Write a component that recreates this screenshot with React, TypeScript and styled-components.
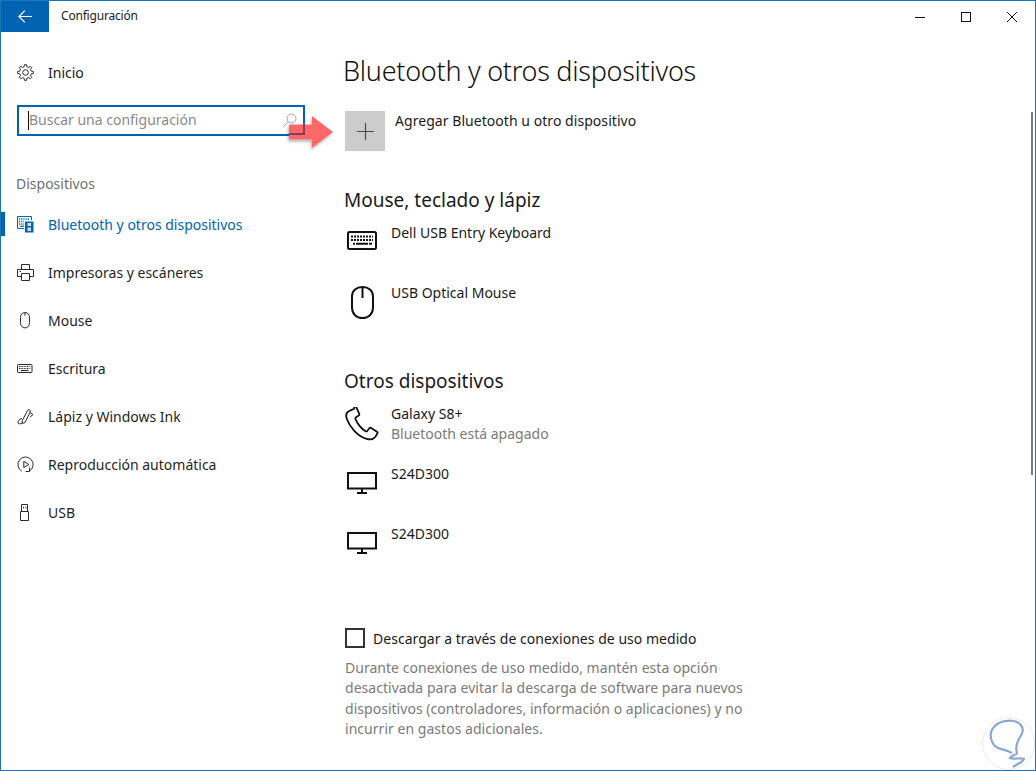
import React from "react";
import styled, { createGlobalStyle } from "styled-components";

const Global = createGlobalStyle`
  html, body { margin: 0; padding: 0; height: 100%; background: #fff; }
  #root { height: 100%; }
  * { box-sizing: border-box; }
`;

const FONT = `"Noto Sans", "Open Sans", sans-serif`;

const Frame = styled.div`
  position: relative;
  width: 1036px;
  height: 771px;
  overflow: hidden;
  background: #fff;
  border: 1px solid #1b74b8;
  font-family: ${FONT};
  color: #1a1a1a;
  display: flex;
  flex-direction: column;
`;

const TitleBar = styled.header`
  height: 31px;
  flex: none;
  display: flex;
  align-items: center;
`;

const BackButton = styled.div`
  width: 48px;
  height: 31px;
  background: #0063b1;
  display: flex;
  align-items: center;
  justify-content: center;
`;

const WindowTitle = styled.div`
  margin-left: 12px;
  padding-bottom: 2px;
  font-size: 12px;
  letter-spacing: -0.2px;
  flex: 1;
`;

const WindowControls = styled.div`
  display: flex;
  align-items: center;
  padding-right: 18px;
  gap: 36px;
`;

const ControlIcon = styled.svg`
  width: 10px;
  height: 10px;
  display: block;
`;

const Body = styled.div`
  flex: 1;
  display: flex;
  min-height: 0;
`;

const Sidebar = styled.nav`
  width: 342px;
  flex: none;
  padding-top: 16px;
`;

const HomeRow = styled.div`
  display: flex;
  align-items: center;
  height: 48px;
  padding-left: 16px;
  font-size: 14px;
`;

const NavIconSlot = styled.span`
  width: 31px;
  height: 20px;
  flex: none;
  display: flex;
  align-items: center;
  color: #2b2b2b;
`;

const SearchBox = styled.div`
  margin: 9px 0 0 16px;
  width: 288px;
  height: 31px;
  border: 2px solid #0063b1;
  display: flex;
  align-items: center;
  padding: 0 6px 0 9px;
  font-size: 14px;
  color: #8a8a8a;
`;

const Caret = styled.span`
  width: 1px;
  height: 19px;
  background: #111;
  flex: none;
`;

const SearchText = styled.span`
  flex: 1;
  padding-bottom: 2px;
`;

const GroupLabel = styled.div`
  margin: 36px 0 0 15px;
  height: 24px;
  line-height: 24px;
  font-size: 14px;
  color: #6f6f6f;
`;

const NavList = styled.div`
  margin-top: 4px;
`;

const NavItem = styled.div<{ $active?: boolean }>`
  position: relative;
  height: 48px;
  display: flex;
  align-items: center;
  padding-left: 16px;
  font-size: 14px;
  color: ${(p) => (p.$active ? "#0063b1" : "#1f1f1f")};
  ${NavIconSlot} { color: ${(p) => (p.$active ? "#0063b1" : "#2b2b2b")}; }
  &::before {
    content: "";
    display: ${(p) => (p.$active ? "block" : "none")};
    position: absolute;
    left: 0;
    top: 12px;
    width: 4px;
    height: 24px;
    background: #0063b1;
  }
`;

const Main = styled.main`
  flex: 1;
  min-width: 0;
`;

const PageTitle = styled.h1`
  margin: 17px 0 0 0;
  height: 44px;
  line-height: 44px;
  font-size: 27px;
  font-weight: 300;
  letter-spacing: -0.27px;
  color: #111;
`;

const AddRow = styled.div`
  display: flex;
  align-items: flex-start;
  margin: 18px 0 0 2px;
  gap: 10px;
`;

const AddTile = styled.div`
  width: 40px;
  height: 40px;
  background: #cccccc;
  display: flex;
  align-items: center;
  justify-content: center;
`;

const AddLabel = styled.div`
  font-size: 14px;
  letter-spacing: 0.05px;
  line-height: 20px;
`;

const SectionTitle = styled.h2<{ $top: number }>`
  margin: ${(p) => p.$top}px 0 0 1px;
  height: 26px;
  line-height: 26px;
  font-size: 19px;
  font-weight: 400;
  color: #1a1a1a;
`;

const DeviceList = styled.div`
  margin-top: 8px;
`;

const DeviceRow = styled.div`
  display: flex;
  align-items: flex-start;
  height: 60px;
  padding-left: 2px;
`;

const DeviceIconSlot = styled.div`
  width: 46px;
  height: 40px;
  flex: none;
  color: #111;
`;

const DeviceText = styled.div`
  font-size: 14px;
  line-height: 20px;
  padding-top: 2px;
`;

const DeviceSub = styled.div`
  color: #7a7a7a;
`;

const CheckRow = styled.div`
  display: flex;
  align-items: center;
  margin: 46px 0 0 2px;
  gap: 8px;
  font-size: 14px;
  letter-spacing: 0.03px;
`;

const CheckBox = styled.span`
  width: 20px;
  height: 20px;
  border: 2px solid #333;
  flex: none;
`;

const Description = styled.p`
  margin: 10px 0 0 2px;
  width: 404px;
  font-size: 14px;
  letter-spacing: 0.03px;
  line-height: 20.3px;
  color: #7a7a7a;
`;

const ScrollThumb = styled.div`
  position: absolute;
  right: 2px;
  top: 111px;
  width: 2px;
  height: 363px;
  background: #7a7a7a;
`;

const ArrowOverlay = styled.svg`
  position: absolute;
  left: 287px;
  top: 113px;
  width: 50px;
  height: 40px;
  overflow: visible;
`;

const Watermark = styled.svg`
  position: absolute;
  right: 0;
  bottom: 0;
  width: 53px;
  height: 53px;
`;

const sx = { fill: "none", stroke: "currentColor", strokeWidth: 1 } as const;

const I16 = ({ children }: { children: React.ReactNode }) => (
  <svg width="17" height="17" viewBox="0 0 17 17" {...sx}>{children}</svg>
);

const gearPath = (() => {
  const pts: string[] = [];
  const teeth = 8;
  for (let i = 0; i < teeth; i++) {
    const a = (i / teeth) * Math.PI * 2 - Math.PI / 2;
    const step = (Math.PI * 2) / teeth;
    const at = (r: number, d: number) =>
      `${(8.5 + r * Math.cos(a + d * step)).toFixed(2)} ${(8.5 + r * Math.sin(a + d * step)).toFixed(2)}`;
    pts.push(at(5.9, -0.3), at(7.9, -0.17), at(7.9, 0.17), at(5.9, 0.3));
  }
  return `M${pts.join("L")}Z`;
})();

const Gear = () => (
  <I16>
    <path d={gearPath} />
    <circle cx="8.5" cy="8.5" r="2.8" />
  </I16>
);

const BluetoothDevices = () => (
  <I16>
    <path d="M7 12.5H.5V.5h14v3.5" />
    <path d="M2 3h11M2 5.5h5M2 8h5" strokeWidth="1.3" strokeDasharray="1.2 1" />
    <path d="M3 10.2h4" strokeWidth="1.2" />
    <rect x="8" y="5.5" width="8.5" height="11" fill="currentColor" stroke="none" />
    <rect x="10.5" y="7" width="3.5" height="3" fill="#cfe0f0" stroke="none" />
    <rect x="10.5" y="11.5" width="3.5" height="3.5" fill="#cfe0f0" stroke="none" />
  </I16>
);

const Printer = () => (
  <I16>
    <path d="M4.5 5.5v-5h8v5" />
    <path d="M4 12.5H.5v-7h16v7H13" />
    <path d="M4.5 9.5h8v7h-8z" />
    <path d="M2.5 7.5h1.5" />
  </I16>
);

const MouseSmall = () => (
  <I16>
    <path d="M3.5 5.5C3.5 2.3 5.3.6 8 .6s4.5 1.7 4.5 4.9v5.2c0 3-1.8 5.2-4.5 5.2s-4.5-2.2-4.5-5.2z" />
    <path d="M8 .8v3" />
  </I16>
);

const KeyboardSmall = () => (
  <I16>
    <rect x=".5" y="4.5" width="14.5" height="8" rx=".8" />
    <path d="M2 6.5h11.5M2 8.5h11.5" strokeDasharray="1 .6" strokeWidth="1.1" />
    <path d="M4 10.5h7.5" strokeWidth="1.1" />
  </I16>
);

const Pen = () => (
  <I16>
    <path d="M5 13L10.5 2.7C11 1.5 12.6 1.2 13.2 2.3L13 4.3 8 14.5 5.5 15.5z" />
    <path d="M13 4.5L16 6.5 13 9" />
    <path d="M5 10.5C2 11 .5 13.5 1 15c.5 1.5 3 1 4.5-.6" />
  </I16>
);

const AutoPlay = () => (
  <I16>
    <path d="M4.8 15.2A7.6 7.6 0 1 1 12.6 15" />
    <path d="M6.8 5.4l5 3.1-5 3.1z" />
    <path d="M12.6 11.4v4.1H8.6" />
  </I16>
);

const Usb = () => (
  <I16>
    <path d="M3.5 7.5h8v9h-8z" />
    <path d="M4.5 7.5V.5h6v7" />
    <path d="M6 3.5h1M8.5 3.5h1" strokeWidth="1.4" />
  </I16>
);

const Keyboard = () => (
  <svg width="30" height="19" viewBox="0 0 30 19" style={{ margin: "10px 0 0 2px" }}>
    <rect x="1" y="1" width="28" height="17" rx="1.5" fill="none" stroke="currentColor" strokeWidth="2" />
    <path d="M4 5.5h22M4 9h22" stroke="currentColor" strokeWidth="2" strokeDasharray="2 1" fill="none" />
    <path d="M6 12.7h2M9 12.7h12M22 12.7h3" stroke="currentColor" strokeWidth="2" fill="none" />
  </svg>
);

const MouseLarge = () => (
  <svg width="23" height="33" viewBox="0 0 23 33" fill="none" stroke="currentColor" strokeWidth="2" style={{ margin: "5px 0 0 6px" }}>
    <path d="M1 10.5C1 4.5 5.5 1 11.5 1S22 4.5 22 10.5v11C22 28 17.5 32 11.5 32S1 28 1 21.5z" />
    <path d="M11.5 1v11" />
  </svg>
);

const Phone = () => (
  <svg width="34" height="34" viewBox="0 0 34 34" fill="none" stroke="currentColor" strokeWidth="1.8" style={{ margin: "5px 0 0 0" }}>
    <path d="M9.2 1.6L3.8 4.2C1.2 5.6 .7 8.7 1.9 12c2.6 7.5 10.5 17.3 19.8 19.8 3.7 1 7 .2 8.5-1.8l2.2-3.4c.4-.7.2-1.4-.5-1.9l-5.7-3.7c-.7-.4-1.4-.3-1.9.3l-1.9 2.5c-.5.6-1.2.7-1.9.4-3.7-2-8.3-7.6-10-12.2-.3-.8 0-1.4.6-1.8l2.6-1.6c.6-.4.8-1.1.5-1.8l-2.8-6.6c-.4-.8-1.1-1-2.2-.6z" />
  </svg>
);

const Monitor = () => (
  <svg width="30" height="22" viewBox="0 0 30 22" fill="none" stroke="currentColor" strokeWidth="2" style={{ margin: "10px 0 0 2px" }}>
    <rect x="1" y="1" width="28" height="15.5" />
    <path d="M15 17v4M10 21h10" />
  </svg>
);

const Nav = [
  { label: "Impresoras y escáneres", icon: <Printer /> },
  { label: "Mouse", icon: <MouseSmall /> },
  { label: "Escritura", icon: <KeyboardSmall /> },
  { label: "Lápiz y Windows Ink", icon: <Pen /> },
  { label: "Reproducción automática", icon: <AutoPlay /> },
  { label: "USB", icon: <Usb /> },
];

export default function App() {
  return (
    <Frame>
      <Global />
      <TitleBar>
        <BackButton>
          <svg width="14" height="13" viewBox="0 0 14 13" fill="none" stroke="#fff" strokeWidth="1.2">
            <path d="M14 6.5H1M6.8.7L1 6.5l5.8 5.8" />
          </svg>
        </BackButton>
        <WindowTitle>Configuración</WindowTitle>
        <WindowControls>
          <ControlIcon viewBox="0 0 10 10"><path d="M0 5.5h10" stroke="#111" fill="none" /></ControlIcon>
          <ControlIcon viewBox="0 0 10 10"><rect x=".5" y=".5" width="9" height="9" stroke="#111" fill="none" /></ControlIcon>
          <ControlIcon viewBox="0 0 10 10"><path d="M0 0l10 10M10 0L0 10" stroke="#111" fill="none" /></ControlIcon>
        </WindowControls>
      </TitleBar>
      <Body>
        <Sidebar>
          <HomeRow>
            <NavIconSlot><Gear /></NavIconSlot>
            Inicio
          </HomeRow>
          <SearchBox>
            <Caret />
            <SearchText>Buscar una configuración</SearchText>
            <svg width="15" height="15" viewBox="0 0 15 15" fill="none" stroke="#a5a5a5" strokeWidth="1">
              <circle cx="9.5" cy="5.5" r="4.5" />
              <path d="M6.2 8.8L.8 14.2" />
            </svg>
          </SearchBox>
          <GroupLabel>Dispositivos</GroupLabel>
          <NavList>
            <NavItem $active>
              <NavIconSlot><BluetoothDevices /></NavIconSlot>
              Bluetooth y otros dispositivos
            </NavItem>
            {Nav.map((n) => (
              <NavItem key={n.label}>
                <NavIconSlot>{n.icon}</NavIconSlot>
                {n.label}
              </NavItem>
            ))}
          </NavList>
        </Sidebar>
        <Main>
          <PageTitle>Bluetooth y otros dispositivos</PageTitle>
          <AddRow>
            <AddTile>
              <svg width="17" height="17" viewBox="0 0 17 17" stroke="#4a4a4a" strokeWidth="1.2">
                <path d="M8.5 0v17M0 8.5h17" />
              </svg>
            </AddTile>
            <AddLabel>Agregar Bluetooth u otro dispositivo</AddLabel>
          </AddRow>
          <SectionTitle $top={36}>Mouse, teclado y lápiz</SectionTitle>
          <DeviceList>
            <DeviceRow>
              <DeviceIconSlot><Keyboard /></DeviceIconSlot>
              <DeviceText>Dell USB Entry Keyboard</DeviceText>
            </DeviceRow>
            <DeviceRow>
              <DeviceIconSlot><MouseLarge /></DeviceIconSlot>
              <DeviceText>USB Optical Mouse</DeviceText>
            </DeviceRow>
          </DeviceList>
          <SectionTitle $top={27}>Otros dispositivos</SectionTitle>
          <DeviceList>
            <DeviceRow>
              <DeviceIconSlot><Phone /></DeviceIconSlot>
              <DeviceText>
                Galaxy S8+
                <DeviceSub>Bluetooth está apagado</DeviceSub>
              </DeviceText>
            </DeviceRow>
            <DeviceRow>
              <DeviceIconSlot><Monitor /></DeviceIconSlot>
              <DeviceText>S24D300</DeviceText>
            </DeviceRow>
            <DeviceRow>
              <DeviceIconSlot><Monitor /></DeviceIconSlot>
              <DeviceText>S24D300</DeviceText>
            </DeviceRow>
          </DeviceList>
          <CheckRow>
            <CheckBox />
            Descargar a través de conexiones de uso medido
          </CheckRow>
          <Description>
            Durante conexiones de uso medido, mantén esta opción desactivada para evitar la descarga de software para nuevos dispositivos (controladores, información o aplicaciones) y no incurrir en gastos adicionales.
          </Description>
        </Main>
      </Body>
      <ScrollThumb />
      <ArrowOverlay viewBox="0 0 50 40">
        <defs>
          <filter id="arrowShadow" x="-20%" y="-20%" width="140%" height="140%">
            <feDropShadow dx="-1" dy="2" stdDeviation="1.5" floodColor="#000" floodOpacity="0.3" />
          </filter>
        </defs>
        <path d="M1 10.5h23V2l21 16-21 16v-8.5H1z" fill="#ff6868" filter="url(#arrowShadow)" />
        <path d="M15 10.5h2V21H1v-2h14z" fill="#8c3a62" />
      </ArrowOverlay>
      <Watermark viewBox="0 0 53 53">
        <circle cx="26.5" cy="26.5" r="26" fill="#fff" stroke="#e6eaf4" strokeWidth="1" />
        <path d="M30 36C24 32 17 33 13 29 8 24 7 15 12 10 17 4 28 2 35 5 42 9 42 15 38 20 35 25 33 30 35 36 35 38 30 38 28 41 32 43 38 40 42 42 40 46 35 47 31 50" fill="none" stroke="#8aa6d4" strokeWidth="2.2" />
      </Watermark>
    </Frame>
  );
}
